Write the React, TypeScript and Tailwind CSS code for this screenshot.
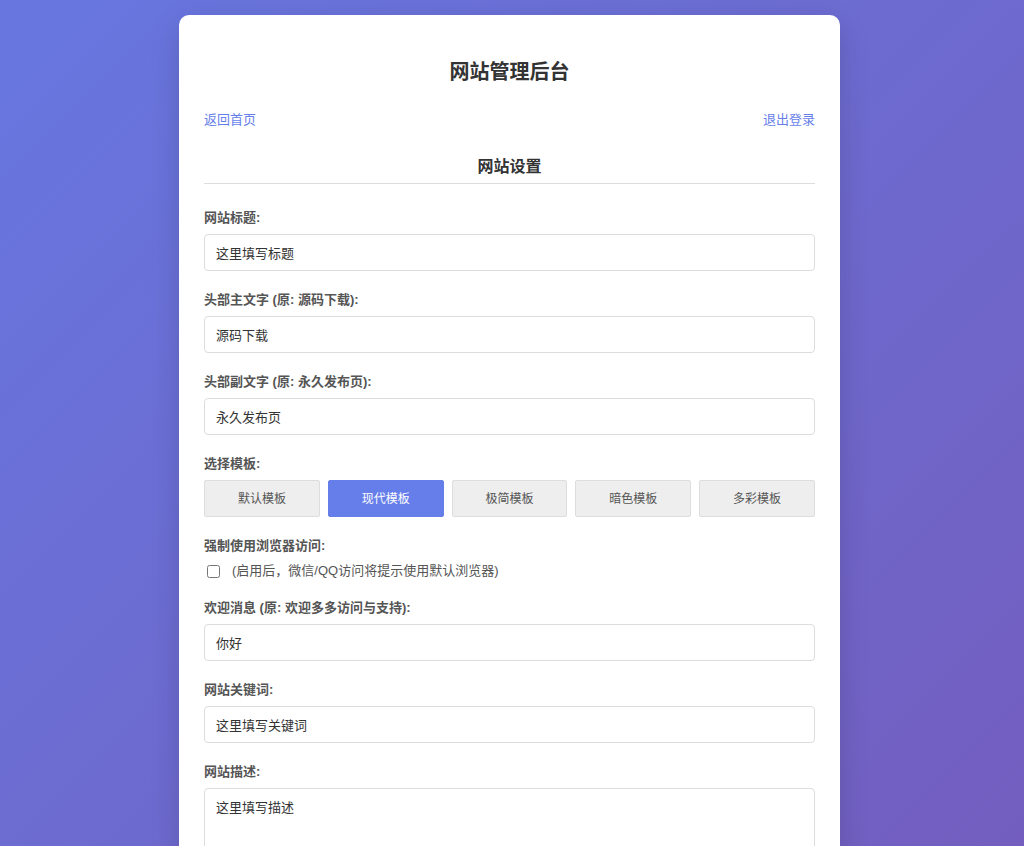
import * as React from "react";

const templates = ["默认模板", "现代模板", "极简模板", "暗色模板", "多彩模板"];

function Field({
  label,
  value,
  onChange,
}: {
  label: string;
  value: string;
  onChange: (v: string) => void;
}) {
  return (
    <div className="mb-5">
      <label className="mb-[7px] block text-[13px] font-bold leading-[18px] text-[#555]">
        {label}
      </label>
      <input
        type="text"
        value={value}
        onChange={(e) => onChange(e.target.value)}
        className="box-border block h-[37px] w-full rounded-[4px] border border-[#ddd] bg-white px-[11px] text-[13px] text-[#333] outline-none focus:border-[#667eea]"
      />
    </div>
  );
}

export default function App() {
  const [title, setTitle] = React.useState("这里填写标题");
  const [mainText, setMainText] = React.useState("源码下载");
  const [subText, setSubText] = React.useState("永久发布页");
  const [template, setTemplate] = React.useState("现代模板");
  const [forceBrowser, setForceBrowser] = React.useState(false);
  const [welcome, setWelcome] = React.useState("你好");
  const [keywords, setKeywords] = React.useState("这里填写关键词");
  const [description, setDescription] = React.useState("这里填写描述");

  return (
    <div
      className="min-h-screen bg-fixed bg-[linear-gradient(135deg,#6777e0_0%,#735ebf_100%)] pt-[15px] pb-10"
      style={{ fontFamily: '"Liberation Sans", "Noto Sans CJK SC", sans-serif' }}
    >
      <div className="mx-auto ml-[179px] w-[661px] rounded-[10px] bg-white px-[25px] pt-[45px] pb-[30px] shadow-[0_10px_30px_rgba(0,0,0,0.15)]">
        <h1 className="text-center text-[20px] font-bold leading-[24px] text-[#333]">
          网站管理后台
        </h1>

        <div className="mt-[26px] flex items-center justify-between text-[13px] leading-[20px]">
          <a href="#" className="text-[#667eea] no-underline">
            返回首页
          </a>
          <a href="#" className="text-[#667eea] no-underline">
            退出登录
          </a>
        </div>

        <h2 className="mt-[26px] border-b border-[#ddd] pb-[5px] text-center text-[16px] font-bold leading-[22px] text-[#333]">
          网站设置
        </h2>

        <form className="mt-[25px]" onSubmit={(e) => e.preventDefault()}>
          <Field label="网站标题:" value={title} onChange={setTitle} />
          <Field label="头部主文字 (原: 源码下载):" value={mainText} onChange={setMainText} />
          <Field label="头部副文字 (原: 永久发布页):" value={subText} onChange={setSubText} />

          <div className="mb-5">
            <label className="mb-[7px] block text-[13px] font-bold leading-[18px] text-[#555]">
              选择模板:
            </label>
            <div className="grid grid-cols-5 gap-2">
              {templates.map((t) => (
                <button
                  key={t}
                  type="button"
                  onClick={() => setTemplate(t)}
                  className={
                    t === template
                      ? "h-[37px] rounded-[2px] border border-[#667eea] bg-[#667eea] text-[12px] text-white"
                      : "h-[37px] rounded-[2px] border border-[#ddd] bg-[#eee] text-[12px] text-[#555]"
                  }
                >
                  {t}
                </button>
              ))}
            </div>
          </div>

          <div className="mb-[19px]">
            <label className="mb-[7px] block text-[13px] font-bold leading-[18px] text-[#555]">
              强制使用浏览器访问:
            </label>
            <label className="flex items-center text-[13px] leading-[18px] text-[#555]">
              <input
                type="checkbox"
                checked={forceBrowser}
                onChange={(e) => setForceBrowser(e.target.checked)}
                className="mr-[12px] ml-[3px] h-[13px] w-[13px]"
              />
              (启用后，微信/QQ访问将提示使用默认浏览器)
            </label>
          </div>

          <Field label="欢迎消息 (原: 欢迎多多访问与支持):" value={welcome} onChange={setWelcome} />
          <Field label="网站关键词:" value={keywords} onChange={setKeywords} />

          <div className="mb-5">
            <label className="mb-[7px] block text-[13px] font-bold leading-[18px] text-[#555]">
              网站描述:
            </label>
            <textarea
              value={description}
              onChange={(e) => setDescription(e.target.value)}
              rows={4}
              className="box-border block h-[100px] w-full resize-y rounded-[4px] border border-[#ddd] bg-white px-[11px] py-[10px] text-[13px] leading-[18px] text-[#333] outline-none"
            />
          </div>

          <button
            type="submit"
            className="h-[40px] w-full rounded-[4px] bg-[#667eea] text-[14px] text-white"
          >
            保存设置
          </button>
        </form>
      </div>
    </div>
  );
}
